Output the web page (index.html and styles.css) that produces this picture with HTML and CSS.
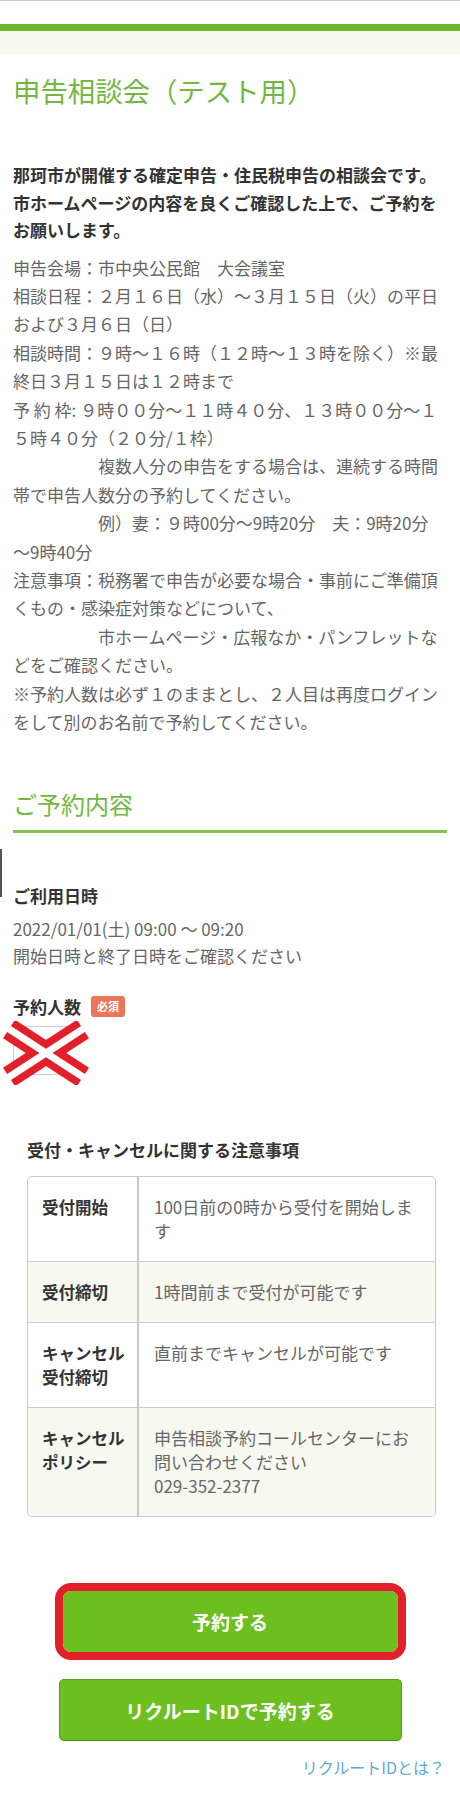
FILE: index.html
```html
<!DOCTYPE html>
<html lang="ja">
<head>
  <meta charset="UTF-8" />
  <meta name="viewport" content="width=device-width, initial-scale=1" />
  <title>申告相談会（テスト用）</title>
  <link rel="stylesheet" href="styles.css">
</head>
<body>
  <div class="topbar"></div>
  <div class="band"></div>

  <main class="content">
    <h1 class="title">申告相談会（テスト用）</h1>

    <p class="lead">
      那珂市が開催する確定申告・住民税申告の相談会です。<br>
      市ホームページの内容を良くご確認した上で、ご予約を<br>
      お願いします。
    </p>

    <p class="info">
      申告会場：市中央公民館　大会議室<br>
      相談日程：２月１６日（水）〜３月１５日（火）の平日<br>
      および３月６日（日）<br>
      相談時間：９時〜１６時（１２時〜１３時を除く）※最<br>
      終日３月１５日は１２時まで<br>
      予 約 枠: ９時００分〜１１時４０分、１３時００分〜１<br>
      ５時４０分（２０分/１枠）<br>
      　　　　　複数人分の申告をする場合は、連続する時間<br>
      帯で申告人数分の予約してください。<br>
      　　　　　例）妻：９時00分〜9時20分　夫：9時20分<br>
      〜9時40分<br>
      注意事項：税務署で申告が必要な場合・事前にご準備頂<br>
      くもの・感染症対策などについて、<br>
      　　　　　市ホームページ・広報なか・パンフレットな<br>
      どをご確認ください。<br>
      ※予約人数は必ず１のままとし、２人目は再度ログイン<br>
      をして別のお名前で予約してください。
    </p>

    <h2 class="section-title">ご予約内容</h2>

    <section class="booking">
      <span class="edge-mark"></span>

      <div class="field-label">ご利用日時</div>
      <p class="field-text">
        2022/01/01(土) 09:00 〜 09:20<br>
        開始日時と終了日時をご確認ください
      </p>

      <div class="field-label count-label">予約人数 <span class="badge">必須</span></div>
      <div class="count-field">
        <div class="count-input"></div>
        <svg class="cross" viewBox="0 0 92 64" aria-hidden="true">
          <line x1="9" y1="8" x2="83" y2="56" stroke="#e3202a" stroke-width="22" />
          <line x1="83" y1="8" x2="9" y2="56" stroke="#e3202a" stroke-width="22" />
          <line x1="4" y1="4.8" x2="88" y2="59.2" stroke="#fff" stroke-width="7" />
          <line x1="88" y1="4.8" x2="4" y2="59.2" stroke="#fff" stroke-width="7" />
        </svg>
      </div>

      <div class="notes">
        <h3 class="notes-title">受付・キャンセルに関する注意事項</h3>
        <table class="notes-table">
          <tr>
            <th>受付開始</th>
            <td>100日前の0時から受付を開始します</td>
          </tr>
          <tr class="alt">
            <th>受付締切</th>
            <td>1時間前まで受付が可能です</td>
          </tr>
          <tr>
            <th>キャンセル<br>受付締切</th>
            <td>直前までキャンセルが可能です</td>
          </tr>
          <tr class="alt">
            <th>キャンセル<br>ポリシー</th>
            <td>申告相談予約コールセンターにお問い合わせください<br>029-352-2377</td>
          </tr>
        </table>
      </div>

      <div class="actions">
        <div class="mark">
          <button class="btn">予約する</button>
        </div>
        <button class="btn btn-recruit">リクルートIDで予約する</button>
        <a href="#" class="help-link">リクルートIDとは？</a>
      </div>
    </section>
  </main>
</body>
</html>
```

FILE: styles.css
```css
body {
  margin: 0;
  font-family: "Noto Sans CJK JP", "Noto Sans", sans-serif;
  color: #666;
  background: #fff;
}

/* header strip */
.topbar {
  border-top: 1px solid #cfcfcf;
  height: 23px;
}

.band {
  border-top: 7px solid #6cb92d;
  height: 24px;
  background: #f8faf1;
}

.content {
  padding: 0 13px;
}

.title {
  margin: 17px 0 0;
  font-size: 27.4px;
  line-height: 36px;
  font-weight: 400;
  color: #74b743;
}

.lead {
  margin: 53px 0 0;
  font-size: 17px;
  line-height: 27.5px;
  font-weight: 700;
  color: #333;
}

.info {
  margin: 10px 0 0;
  font-size: 17px;
  line-height: 28.4px;
  color: #666;
}

.section-title {
  margin: 52px 0 0;
  padding-bottom: 10px;
  font-size: 24px;
  line-height: 32px;
  font-weight: 400;
  color: #74b743;
  border-bottom: 3px solid #84c448;
}

.booking {
  position: relative;
  padding-top: 49px;
}

.edge-mark {
  position: absolute;
  left: -13px;
  top: 16px;
  width: 2px;
  height: 48px;
  background: #555;
}

.field-label {
  font-size: 17px;
  line-height: 27px;
  font-weight: 700;
  color: #333;
}

.field-text {
  margin: 6px 0 0;
  font-size: 17px;
  line-height: 27px;
  color: #666;
}

.count-label {
  margin-top: 24px;
  display: flex;
  align-items: center;
  gap: 10px;
}

.badge {
  display: inline-block;
  background: #ec7659;
  color: #fff;
  font-size: 11px;
  line-height: 21px;
  padding: 0 6px;
  border-radius: 3px;
}

.count-field {
  position: relative;
  margin-top: 6px;
  width: 54px;
  height: 49px;
}

.count-input {
  box-sizing: border-box;
  width: 100%;
  height: 100%;
  border: 1px solid #ccc;
}

.cross {
  position: absolute;
  left: -13px;
  top: -5px;
  width: 92px;
  height: 64px;
}

/* reception notes */
.notes {
  margin: 62px 11px 0 14px;
}

.notes-title {
  margin: 0;
  font-size: 17px;
  line-height: 26px;
  font-weight: 700;
  color: #333;
}

.notes-table {
  margin-top: 13px;
  width: 100%;
  border: 1px solid #ccc;
  border-radius: 5px;
  border-collapse: separate;
  border-spacing: 0;
  overflow: hidden;
}

.notes-table th,
.notes-table td {
  padding: 18px 22px 18px 15px;
  font-size: 17px;
  line-height: 24px;
  text-align: left;
  vertical-align: top;
  border-bottom: 1px solid #ccc;
}

.notes-table th {
  width: 95px;
  padding-left: 14px;
  padding-right: 0;
  font-size: 16.5px;
  font-weight: 700;
  color: #333;
  border-right: 2px solid #c8c8c8;
}

.notes-table tr:last-child th,
.notes-table tr:last-child td {
  border-bottom: none;
}

.notes-table .alt {
  background: #f7f9f1;
}

/* buttons */
.actions {
  margin-top: 66px;
  display: flex;
  flex-direction: column;
  align-items: center;
}

.mark {
  width: 351px;
  box-sizing: border-box;
  border: 8px solid #e3202a;
  border-radius: 16px;
  overflow: hidden;
}

.btn {
  display: block;
  width: 100%;
  height: 61px;
  border: none;
  background: #6cbf1f;
  color: #fff;
  font-family: inherit;
  font-size: 19px;
  font-weight: 700;
  cursor: pointer;
}

.btn-recruit {
  width: 343px;
  height: 62px;
  margin-top: 19px;
  border: 1px solid #5a9a22;
  border-bottom-color: #4b8a18;
  border-radius: 5px;
}

.help-link {
  align-self: flex-end;
  margin: 14px 2px 0 0;
  font-size: 16px;
  line-height: 24px;
  color: #5eaad6;
  text-decoration: none;
}
```
